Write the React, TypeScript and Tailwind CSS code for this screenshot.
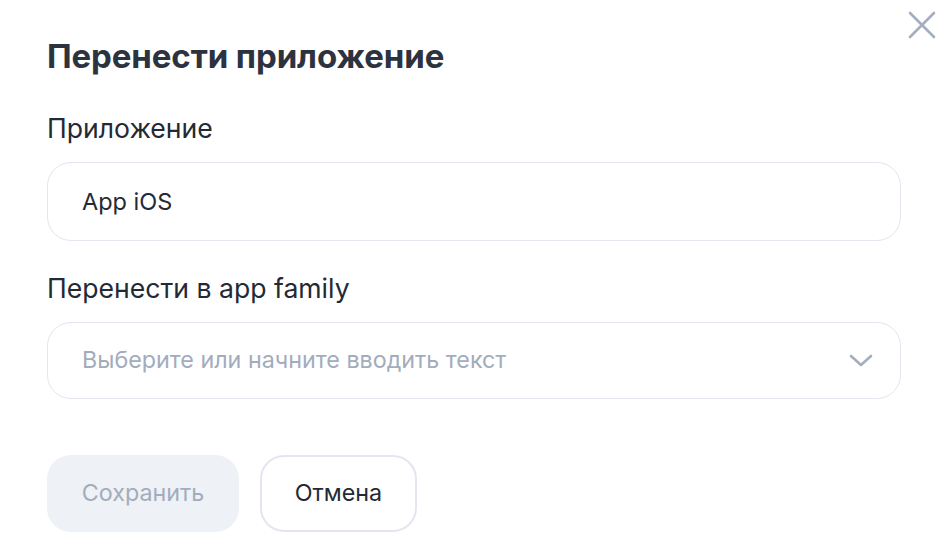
import { useState } from "react";

export default function App() {
  const [app] = useState("App iOS");

  return (
    <div className="relative w-[950px] h-[556px] bg-white font-['Inter',sans-serif] text-[#232a35]">
      {/* Close */}
      <button className="absolute top-[11px] right-[14px] w-[28px] h-[28px] flex items-center justify-center">
        <svg width="28" height="28" viewBox="0 0 28 28" fill="none">
          <path d="M2 2L26 26M26 2L2 26" stroke="#a4aec0" strokeWidth="2.6" strokeLinecap="round" />
        </svg>
      </button>

      <div className="pl-[47px] pr-[49px] pt-[36px]">
        <h1 className="text-[33px] leading-[40px] font-bold tracking-[-0.1px] text-[#2c333f]">Перенести приложение</h1>

        <div className="mt-[37px]">
          <label className="block text-[26.6px] leading-[30px] mb-[19px]">Приложение</label>
          <div className="h-[79px] rounded-[24px] border border-[#e4e6ef] flex items-center px-[34px] text-[23.5px]">
            {app}
          </div>
        </div>

        <div className="mt-[32px]">
          <label className="block text-[26.6px] leading-[30px] mb-[19px]">Перенести в app family</label>
          <div className="h-[77px] rounded-[24px] border border-[#e4e6ef] flex items-center justify-between pl-[34px] pr-[27px]">
            <span className="text-[23.3px] text-[#a3acbc]">Выберите или начните вводить текст</span>
            <svg width="24" height="16" viewBox="0 0 24 16" fill="none">
              <path d="M2 3L12 12L22 3" stroke="#a4aec0" strokeWidth="2.6" strokeLinecap="round" strokeLinejoin="round" />
            </svg>
          </div>
        </div>

        <div className="mt-[56px] flex gap-[21px]">
          <button className="h-[77px] w-[192px] rounded-[24px] bg-[#eef1f6] text-[23.3px] text-[#a3acbc]">Сохранить</button>
          <button className="h-[77px] w-[157px] rounded-[24px] border-2 border-[#e4e6ef] bg-white text-[23.3px] text-[#232a35]">Отмена</button>
        </div>
      </div>
    </div>
  );
}
